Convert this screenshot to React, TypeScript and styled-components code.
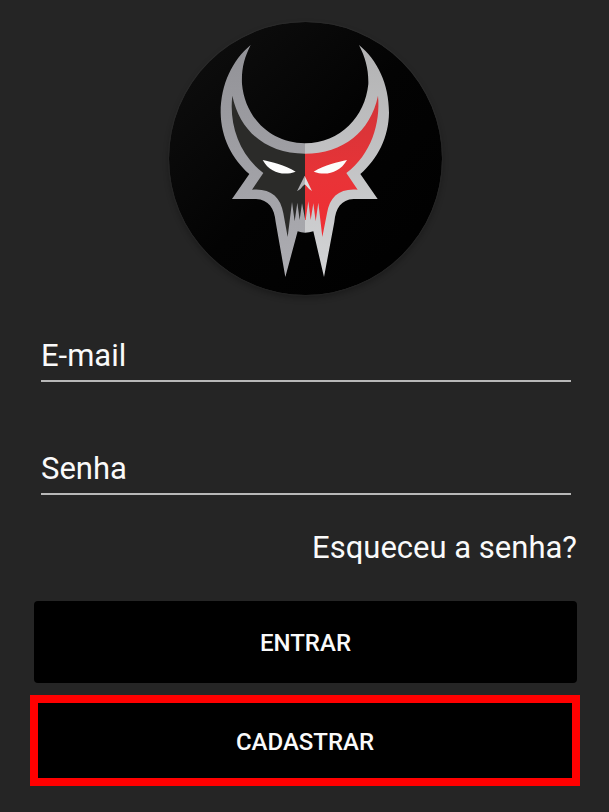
import React from "react";
import styled, { createGlobalStyle } from "styled-components";

const GlobalStyle = createGlobalStyle`
  *, *::before, *::after { box-sizing: border-box; }
  body {
    margin: 0;
    background: #252525;
    color: #fafafa;
    font-family: Roboto, "Liberation Sans", sans-serif;
  }
`;

const Page = styled.main`
  min-height: 100vh;
  padding: 22px 32px 26px 34px;
`;

const LoginForm = styled.form`
  display: flex;
  flex-direction: column;
`;

const Logo = styled.svg`
  display: block;
  align-self: center;
  width: 273px;
  height: 273px;
  margin-bottom: 33px;
  border-radius: 50%;
  box-shadow: 0 3px 6px rgba(0, 0, 0, 0.3), 0 0 2px rgba(255, 255, 255, 0.12);
`;

const Fields = styled.div`
  display: flex;
  flex-direction: column;
  gap: 59px;
  padding: 0 6px 0 7px;
`;

const Field = styled.input`
  display: block;
  width: 100%;
  height: 54px;
  padding: 2px 0 0;
  border: 0;
  border-bottom: 2px solid #b8b8b8;
  border-radius: 0;
  outline: 0;
  background: transparent;
  color: #fafafa;
  font: 400 31px/36px Roboto, "Liberation Sans", sans-serif;

  &::placeholder {
    color: #fafafa;
    opacity: 1;
  }

  &:focus {
    border-bottom-color: #ffffff;
  }
`;

const ForgotLink = styled.a`
  align-self: flex-end;
  margin: 35px 0;
  color: #fafafa;
  font-size: 31px;
  line-height: 36px;
  text-decoration: none;
`;

const Button = styled.button<{ $compact?: boolean }>`
  display: block;
  width: 100%;
  height: ${({ $compact }) => ($compact ? 75 : 82)}px;
  padding: 2px 0 0;
  border: 0;
  border-radius: ${({ $compact }) => ($compact ? 0 : 4)}px;
  background: #000000;
  color: #fafafa;
  font: 500 24px/28px Roboto, "Liberation Sans", sans-serif;
  text-transform: uppercase;
  cursor: pointer;
`;

const Highlight = styled.div`
  margin: 12px -3px 0 -4px;
  border: 8px solid #ff0000;
`;

function SkullLogo() {
  return (
    <Logo viewBox="41 36 819 819" role="img" aria-label="Logo">
      <defs>
        <linearGradient id="disc" x1="0" y1="0" x2="1" y2="1">
          <stop offset="0" stopColor="#101010" />
          <stop offset="0.5" stopColor="#030303" />
          <stop offset="1" stopColor="#000000" />
        </linearGradient>
        <linearGradient id="silver" x1="0" y1="0" x2="0" y2="1">
          <stop offset="0" stopColor="#929297" />
          <stop offset="1" stopColor="#adadb2" />
        </linearGradient>
        <linearGradient id="silverLight" x1="0" y1="0" x2="0" y2="1">
          <stop offset="0" stopColor="#b2b2b3" />
          <stop offset="1" stopColor="#d3d4d6" />
        </linearGradient>
        <linearGradient id="red" x1="0" y1="0" x2="0" y2="1">
          <stop offset="0" stopColor="#d23539" />
          <stop offset="0.6" stopColor="#e93337" />
          <stop offset="1" stopColor="#f02d34" />
        </linearGradient>
      </defs>
      <circle cx="450.5" cy="445.5" r="409.5" fill="url(#disc)" />
      <path
        fill="url(#silver)"
        d="M286 105C232 150 196 222 196 308C197 382 230 446 282 492L230 567H302C340 569 357 594 361 636L390 801L427 664Q438 668 449 668V400C342 398 269 321 260 222C258 176 267 143 286 105Z"
      />
      <path
        fill="url(#silverLight)"
        d="M611 105C666 150 701 222 701 308C700 382 667 446 615 492L667 567H595C557 569 541 594 537 636L506 801L474 664Q461 668 449 668V400C556 398 629 321 639 222C640 176 630 143 611 105Z"
      />
      <path
        fill="#2b2b29"
        d="M231 257C221 340 249 432 324 489L290 539C343 534 376 559 384 610L397 681L410 576L418 634L426 578L433 630L440 580L449 626V431C334 430 254 366 231 257Z"
      />
      <path
        fill="url(#red)"
        d="M668 257C676 340 648 432 573 489L607 539C554 534 523 559 515 610L501 681L489 578L481 634L474 580L466 630L459 574L451 630H449V431C564 430 645 366 668 257Z"
      />
      <path fill="#fcfcfc" d="M322 450C349 456 388 464 421 485C386 498 344 490 322 450Z" />
      <path fill="#fcfcfc" d="M575 450C549 456 508 464 475 485C511 498 552 490 575 450Z" />
      <path fill="#b2b2b6" d="M448 497L425 544Q436 539 442 529L449 523Z" />
      <path fill="#dedfe0" d="M448 497L470 543Q460 538 454 529L448 523Z" />
    </Logo>
  );
}

export default function App() {
  return (
    <>
      <GlobalStyle />
      <Page>
        <LoginForm onSubmit={(event) => event.preventDefault()}>
          <SkullLogo />
          <Fields>
            <Field type="email" name="email" placeholder="E-mail" aria-label="E-mail" />
            <Field type="password" name="password" placeholder="Senha" aria-label="Senha" />
          </Fields>
          <ForgotLink href="#recuperar">Esqueceu a senha?</ForgotLink>
          <Button type="submit">Entrar</Button>
          <Highlight>
            <Button type="button" $compact>Cadastrar</Button>
          </Highlight>
        </LoginForm>
      </Page>
    </>
  );
}
